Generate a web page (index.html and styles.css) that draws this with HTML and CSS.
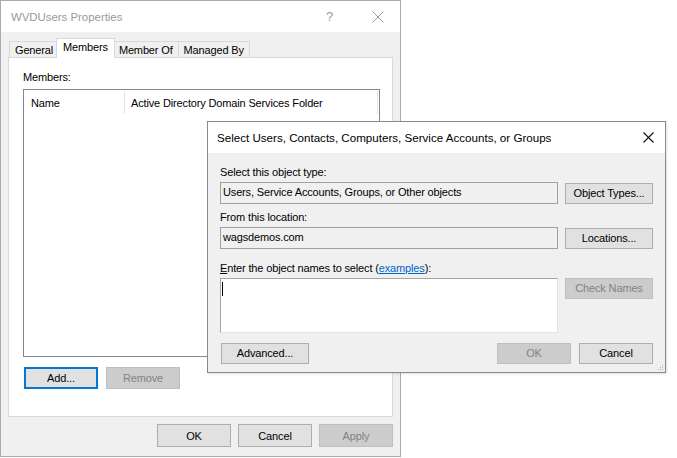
FILE: index.html
```html
<!DOCTYPE html>
<html>
<head>
<meta charset="utf-8">
<link rel="stylesheet" href="styles.css">
</head>
<body>
<div class="desktop">
  <div class="win main">
    <div class="titlebar">
      <span class="title inactive">WVDUsers Properties</span>
      <span class="help">?</span>
      <svg class="close" width="12" height="12" viewBox="0 0 12 12"><path d="M0.5 0.5 L11.5 11.5 M11.5 0.5 L0.5 11.5" stroke="#999" stroke-width="1" fill="none"/></svg>
    </div>
    <div class="mbody">
      <div class="tabs">
        <div class="tab">General</div>
        <div class="tab sel">Members</div>
        <div class="tab">Member Of</div>
        <div class="tab">Managed By</div>
      </div>
      <div class="panel">
        <div class="lbl">Members:</div>
        <div class="listbox">
          <div class="lhead">
            <div class="col c1">Name</div>
            <div class="col c2">Active Directory Domain Services Folder</div>
          </div>
        </div>
        <div class="row-btns">
          <button class="btn focus">Add...</button>
          <button class="btn dis">Remove</button>
        </div>
      </div>
      <div class="footer">
        <button class="btn">OK</button>
        <button class="btn">Cancel</button>
        <button class="btn dis">Apply</button>
      </div>
    </div>
  </div>

  <div class="win dlg">
    <div class="titlebar dtitle">
      <span class="title">Select Users, Contacts, Computers, Service Accounts, or Groups</span>
      <svg class="dclose" width="11" height="11" viewBox="0 0 11 11"><path d="M0.5 0.5 L10.5 10.5 M10.5 0.5 L0.5 10.5" stroke="#111" stroke-width="1.1" fill="none"/></svg>
    </div>
    <div class="dbody">
      <div class="dlbl first">Select this object type:</div>
      <div class="frow">
        <div class="tbox ro">Users, Service Accounts, Groups, or Other objects</div>
        <button class="btn side">Object Types...</button>
      </div>
      <div class="dlbl second">From this location:</div>
      <div class="frow">
        <div class="tbox ro">wagsdemos.com</div>
        <button class="btn side">Locations...</button>
      </div>
      <div class="dlbl third"><u>E</u>nter the object names to select (<a class="link">examples</a>):</div>
      <div class="frow">
        <div class="tarea"><span class="caret"></span></div>
        <button class="btn side dis">Check Names</button>
      </div>
      <div class="drow-btns">
        <button class="btn adv">Advanced...</button>
        <div class="spacer"></div>
        <button class="btn dis">OK</button>
        <button class="btn">Cancel</button>
      </div>
      <svg class="grip" width="7" height="7" viewBox="0 0 7 7">
        <rect x="5" y="1" width="1" height="1" fill="#b5b5b5"/>
        <rect x="3" y="3" width="1" height="1" fill="#b5b5b5"/>
        <rect x="5" y="3" width="1" height="1" fill="#b5b5b5"/>
        <rect x="1" y="5" width="1" height="1" fill="#b5b5b5"/>
        <rect x="3" y="5" width="1" height="1" fill="#b5b5b5"/>
        <rect x="5" y="5" width="1" height="1" fill="#b5b5b5"/>
      </svg>
    </div>
  </div>
</div>
</body>
</html>
```
FILE: styles.css
```css
* { box-sizing: border-box; }
html, body { margin: 0; padding: 0; background: #fff; }
body {
  font-family: "Liberation Sans", Arial, sans-serif;
  font-size: 11px;
  letter-spacing: -0.15px;
  color: #000;
}
.desktop { position: relative; width: 677px; height: 458px; overflow: hidden; }

.win { position: absolute; background: #f0f0f0; }
.main { left: 0; top: 0; width: 401px; height: 457px; border: 1px solid #aaaaaa; display: flex; flex-direction: column; }
.titlebar { background: #fff; height: 31px; display: flex; align-items: center; flex-shrink: 0; }
.main .titlebar { padding-left: 10px; }
.title { font-size: 11.6px; line-height: 16px; letter-spacing: 0; }
.inactive { color: #999; font-size: 11.4px; }
.help { margin-left: auto; color: #999; font-size: 13px; width: 12px; letter-spacing: 0; }
.close { margin-left: 34px; margin-right: 16px; }

.mbody { flex: 1; padding: 0 7px; display: flex; flex-direction: column; }
.tabs { display: flex; align-items: flex-end; height: 26px; padding-left: 1px; }
.tab {
  height: 17px; padding: 0 5px; border: 1px solid #d9d9d9; border-bottom: none;
  background: #f0f0f0; line-height: 16px; margin-right: -1px; color: #000;
}
.tab.sel { background: #fff; height: 20px; line-height: 16px; padding: 0 6px; position: relative; z-index: 1; margin: 0 -1px 0 -2px; padding-bottom: 3px; }
.tab.sel + .tab { margin-left: -1px; }
.panel {
  background: #fff; border: 1px solid #d9d9d9; height: 360px; margin-top: -1px;
  padding: 11px 11px 0 14px;
}
.lbl { line-height: 16px; height: 16px; }
.listbox { margin-top: 4px; width: 357px; height: 268px; border: 1px solid #828790; background: #fff; }
.lhead { display: flex; height: 25px; }
.col { line-height: 24px; border-right: 1px solid #e5e5e5; margin: 1px 0; padding-left: 7px; }
.c1 { width: 101px; }
.c2 { width: 253px; padding-left: 6px; }

.row-btns { display: flex; gap: 8px; margin-top: 10px; padding-left: 1px; }
.btn {
  font-family: inherit; font-size: 11px; letter-spacing: -0.15px; color: #000;
  width: 74px; height: 22px; background: #e1e1e1; border: 1px solid #adadad;
  padding: 0; margin: 0; line-height: 18px;
}
.btn.dis { background: #cccccc; border-color: #bfbfbf; color: #838383; }
.btn.focus { border: 2px solid #0078d7; }
.footer { display: flex; justify-content: flex-end; gap: 7px; margin-top: 7px; padding-right: 0px; }
.footer .btn { height: 23px; }

.dlg { left: 207px; top: 121px; width: 459px; height: 252px; border: 1px solid #8a8a8a; box-shadow: 1px 1px 2px rgba(0,0,0,0.12); display: flex; flex-direction: column; }
.dtitle { padding-left: 9px; height: 31px; }
.dclose { margin-left: auto; margin-right: 11px; }
.dbody { position: relative; flex: 1; padding: 11px 12px 0 12px; }
.dlbl { line-height: 16px; height: 16px; }
.dlbl.second { margin-top: 5px; }
.dlbl.third { margin-top: 11px; }
.dlbl u { text-decoration: underline; }
.link { color: #0066cc; text-decoration: underline; }
.frow { display: flex; align-items: flex-start; gap: 7px; margin-top: 2px; }
.tbox { width: 338px; height: 22px; border: 1px solid #a0a0a0; background: #f0f0f0; padding-left: 2px; line-height: 18px; }
.btn.side { width: 88px; height: 21px; margin-top: 1px; line-height: 17px; }
.tarea { width: 338px; height: 55px; border: 1px solid #a5a5a5; border-right-color: #e3e3e3; border-bottom-color: #e3e3e3; background: #fff; position: relative; }
.caret { position: absolute; left: 1px; top: 3px; width: 1px; height: 14px; background: #000; }
.tarea + .btn.side { margin-top: 0; height: 21px; }
.drow-btns { display: flex; gap: 8px; margin-top: 10px; padding-left: 1px; }
.drow-btns .btn { height: 21px; line-height: 17px; }
.drow-btns .btn.dis { margin-right: 0; }
.btn.adv { width: 88px; }
.spacer { flex: 1; }
.grip { position: absolute; right: 1px; bottom: 1px; }
```
